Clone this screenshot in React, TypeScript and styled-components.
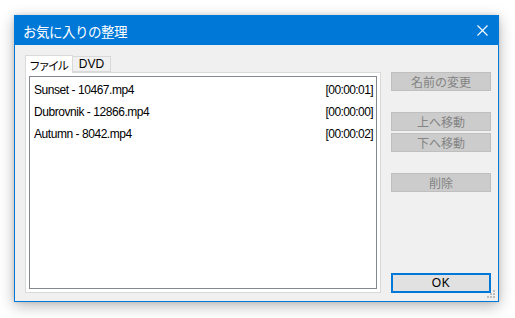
import React from "react";
import styled, { createGlobalStyle } from "styled-components";

const Global = createGlobalStyle`
  html, body { margin: 0; padding: 0; background: #ffffff; }
  body { font-family: "Noto Sans CJK JP", "Liberation Sans", sans-serif; }
`;

const Page = styled.div`
  width: 515px;
  height: 318px;
  padding: 15px 0 0 14px;
  box-sizing: border-box;
`;

const Window = styled.div`
  position: relative;
  width: 485px;
  height: 287px;
  box-sizing: border-box;
  border: 1px solid #0078d7;
  background: #f0f0f0;
  box-shadow: 0 4px 14px rgba(0, 0, 0, 0.28), 0 0 4px rgba(0, 0, 0, 0.12);
  display: flex;
  flex-direction: column;
`;

const TitleBar = styled.div`
  height: 29px;
  background: #0078d7;
  color: #ffffff;
  display: flex;
  align-items: center;
  justify-content: space-between;
  padding: 0 10px 0 8px;
  font-family: "Noto Sans CJK JP", sans-serif;
  font-size: 13.5px;
  flex: none;
`;

const Title = styled.span`
  margin-top: 1px;
  letter-spacing: -0.5px;
`;

const CloseIcon = styled.svg`
  width: 11px;
  height: 11px;
`;

const Body = styled.div`
  flex: 1;
  display: flex;
  padding: 10px 7px 8px 10px;
  gap: 10px;
  min-height: 0;
`;

const LeftCol = styled.div`
  width: 356px;
  display: flex;
  flex-direction: column;
`;

const TabStrip = styled.div`
  display: flex;
  align-items: flex-end;
  height: 17px;
  position: relative;
  z-index: 1;
`;

const Tab = styled.div<{ $active?: boolean }>`
  box-sizing: border-box;
  width: ${(p) => (p.$active ? "48px" : "39px")};
  height: ${(p) => (p.$active ? "18px" : "16px")};
  margin-left: ${(p) => (p.$active ? "0" : "-1px")};
  margin-bottom: ${(p) => (p.$active ? "-1px" : "0")};
  border: 1px solid #d9d9d9;
  border-bottom: ${(p) => (p.$active ? "none" : "1px solid #d9d9d9")};
  background: ${(p) => (p.$active ? "#ffffff" : "#f0f0f0")};
  display: flex;
  align-items: center;
  justify-content: center;
  white-space: nowrap;
  font-size: 12px;
  color: #000;
  font-family: "Liberation Sans", "Noto Sans CJK JP", sans-serif;
`;

const TabText = styled.span`
  font-family: "Noto Sans CJK JP", sans-serif;
  font-size: 11.5px;
  letter-spacing: -2px;
  margin: 1px 0 0 -2px;
`;

const Panel = styled.div`
  flex: 1;
  box-sizing: border-box;
  border: 1px solid #d9d9d9;
  background: #ffffff;
  padding: 3px;
  display: flex;
`;

const ListBox = styled.div`
  flex: 1;
  border: 1px solid #828790;
  background: #ffffff;
  padding-top: 2px;
`;

const Row = styled.div`
  height: 22px;
  display: flex;
  align-items: center;
  justify-content: space-between;
  padding: 0 3px 0 4px;
  font-family: "Liberation Sans", sans-serif;
  font-size: 12px;
  color: #000;
`;

const FileName = styled.span`
  letter-spacing: -0.45px;
`;

const Time = styled.span`
  letter-spacing: -0.6px;
`;

const RightCol = styled.div`
  width: 100px;
  display: flex;
  flex-direction: column;
  padding-top: 17px;
`;

const Button = styled.div<{ $gap?: number; $primary?: boolean }>`
  box-sizing: border-box;
  height: ${(p) => (p.$primary ? "20px" : "19px")};
  margin-top: ${(p) => p.$gap ?? 0}px;
  border: ${(p) => (p.$primary ? "2px solid #0078d7" : "1px solid #bfbfbf")};
  background: ${(p) => (p.$primary ? "#e1e1e1" : "#cccccc")};
  color: ${(p) => (p.$primary ? "#000000" : "#838383")};
  display: flex;
  align-items: center;
  justify-content: center;
  font-family: "Noto Sans CJK JP", sans-serif;
  font-size: 12px;
  line-height: 1;
`;

const OkButton = styled(Button)`
  margin-top: auto;
  font-family: "Liberation Sans", sans-serif;
  letter-spacing: 0.5px;
`;

const Grip = styled.svg`
  position: absolute;
  right: 2px;
  bottom: 2px;
  width: 10px;
  height: 10px;
`;

const files = [
  { name: "Sunset - 10467.mp4", time: "[00:00:01]" },
  { name: "Dubrovnik - 12866.mp4", time: "[00:00:00]" },
  { name: "Autumn - 8042.mp4", time: "[00:00:02]" },
];

export default function App() {
  return (
    <>
      <Global />
      <Page>
        <Window>
          <TitleBar>
            <Title>お気に入りの整理</Title>
            <CloseIcon viewBox="0 0 11 11">
              <path d="M0.5 0.5 L10.5 10.5 M10.5 0.5 L0.5 10.5" stroke="#fff" strokeWidth="1.1" />
            </CloseIcon>
          </TitleBar>
          <Body>
            <LeftCol>
              <TabStrip>
                <Tab $active>
                  <TabText>ファイル</TabText>
                </Tab>
                <Tab>DVD</Tab>
              </TabStrip>
              <Panel>
                <ListBox>
                  {files.map((f) => (
                    <Row key={f.name}>
                      <FileName>{f.name}</FileName>
                      <Time>{f.time}</Time>
                    </Row>
                  ))}
                </ListBox>
              </Panel>
            </LeftCol>
            <RightCol>
              <Button>名前の変更</Button>
              <Button $gap={21}>上へ移動</Button>
              <Button $gap={2}>下へ移動</Button>
              <Button $gap={21}>削除</Button>
              <OkButton $primary>OK</OkButton>
            </RightCol>
          </Body>
          <Grip viewBox="0 0 10 10">
            <rect x="7" y="1" width="2" height="2" fill="#bcbcbc" />
            <rect x="4" y="4" width="2" height="2" fill="#bcbcbc" />
            <rect x="7" y="4" width="2" height="2" fill="#bcbcbc" />
            <rect x="1" y="7" width="2" height="2" fill="#bcbcbc" />
            <rect x="4" y="7" width="2" height="2" fill="#bcbcbc" />
            <rect x="7" y="7" width="2" height="2" fill="#bcbcbc" />
          </Grip>
        </Window>
      </Page>
    </>
  );
}
